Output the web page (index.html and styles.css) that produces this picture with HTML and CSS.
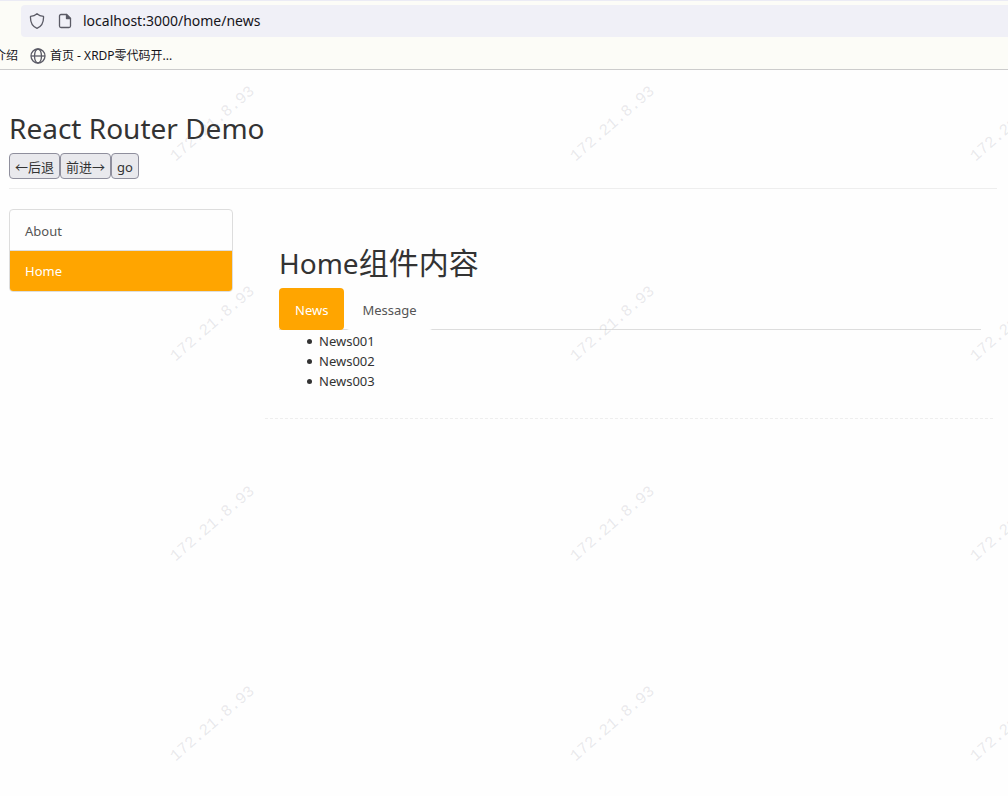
FILE: index.html
```html
<!DOCTYPE html>
<html lang="zh-CN">
<head>
    <meta charset="UTF-8" />
    <title>React Router Demo</title>
    <link rel="stylesheet" href="styles.css">
</head>

<body>
<header class="browser-bar">
    <div class="url-bar">
        <svg class="url-icon" viewBox="0 0 16 16" aria-hidden="true">
            <path d="M8 .8C9.500 2.200 12 3.200 14.500 3.300C14.800 9 12.500 13.500 8 15.300C3.500 13.500 1.200 9 1.500 3.300C4 3.200 6.500 2.200 8 .8Z" />
        </svg>
        <svg class="url-icon" viewBox="0 0 16 16" aria-hidden="true">
            <path d="M9.500 1.500H4A1.500 1.500 0 0 0 2.500 3V13A1.500 1.500 0 0 0 4 14.500H12A1.500 1.500 0 0 0 13.500 13V5.500Z" />
            <path class="fold" d="M9.500 1.500V5.500H13.500Z" />
        </svg>
        <input class="url-input" type="text" value="localhost:3000/home/news" aria-label="URL">
    </div>
    <nav class="bookmarks">
        <a class="bookmark bookmark-cut" href="#">介绍</a>
        <a class="bookmark" href="#">
            <svg class="bookmark-icon" viewBox="0 0 16 16" aria-hidden="true">
                <circle cx="8" cy="8" r="7" />
                <ellipse cx="8" cy="8" rx="3.500" ry="7" />
                <path d="M1 8H15" />
            </svg>
            首页 - XRDP零代码开...
        </a>
    </nav>
</header>

<main class="page">
    <div class="page-header">
        <h2>React Router Demo</h2>
        <div class="nav-buttons">
            <button type="button">←后退</button>
            <button type="button">前进→</button>
            <button type="button">go</button>
        </div>
    </div>

    <div class="row">
        <nav class="list-group">
            <a class="list-group-item" href="#">About</a>
            <a class="list-group-item active" href="#">Home</a>
        </nav>
        <section class="panel">
            <h2>Home<span class="cjk">组件内容</span></h2>
            <ul class="nav-tabs">
                <li><a class="tab active" href="#">News</a></li>
                <li><a class="tab" href="#">Message</a></li>
            </ul>
            <ul class="news-list">
                <li>News001</li>
                <li>News002</li>
                <li>News003</li>
            </ul>
        </section>
    </div>
</main>

<div class="watermark" aria-hidden="true">
    <span>172.21.8.93</span><span>172.21.8.93</span><span>172.21.8.93</span>
    <span>172.21.8.93</span><span>172.21.8.93</span><span>172.21.8.93</span>
    <span>172.21.8.93</span><span>172.21.8.93</span><span>172.21.8.93</span>
    <span>172.21.8.93</span><span>172.21.8.93</span><span>172.21.8.93</span>
</div>
</body>
</html>
```
FILE: styles.css
```css
* {
    box-sizing: border-box;
}

:root {
    --text-color: #333;
    --link-color: #555;
    --border-color: #ddd;
    --active-color: orange;
}

body {
    position: relative;
    margin: 0;
    min-height: 100vh;
    overflow-x: hidden;
    background-color: #fefefe;
    color: var(--text-color);
    font-family: "Noto Sans", "Noto Sans CJK SC", sans-serif;
    font-size: 13px;
    line-height: 20px;
}

a {
    color: var(--link-color);
    text-decoration: none;
}

h2 {
    margin: 0 0 8px;
    font-size: 28px;
    font-weight: 400;
    line-height: 33px;
}

h2 .cjk {
    font-size: 30px;
    line-height: 1;
}

/* Browser toolbar */
.browser-bar {
    height: 70px;
    padding-top: 4px;
    background-color: #fcfcf7;
    border-top: 1px solid #ebebf5;
    border-bottom: 1px solid #ccc;
}

.url-bar {
    display: flex;
    align-items: center;
    gap: 12px;
    height: 32px;
    margin-left: 21px;
    padding-left: 8px;
    background-color: #f0f0f7;
    border-radius: 4px 0 0 4px;
}

.url-icon,
.bookmark-icon {
    width: 16px;
    height: 16px;
    fill: none;
    stroke: #5b5b66;
    stroke-width: 1.3;
    stroke-linejoin: round;
}

.url-icon .fold {
    fill: #5b5b66;
}

.url-input {
    flex: 1;
    margin-left: -2px;
    padding: 0;
    border: none;
    outline: none;
    background: none;
    color: #15141a;
    font: inherit;
    font-size: 14px;
}

.bookmarks {
    display: flex;
    align-items: center;
    gap: 12px;
    padding-top: 9px;
}

.bookmark {
    display: flex;
    align-items: center;
    gap: 4px;
    color: #15141a;
    font-size: 12px;
    white-space: nowrap;
}

.bookmark-cut {
    width: 18px;
    justify-content: flex-end;
    overflow: hidden;
}

/* Page */
.page {
    padding: 42px 11px 0 9px;
}

.page-header {
    margin-bottom: 20px;
    padding-bottom: 9px;
    border-bottom: 1px solid #eee;
}

.nav-buttons {
    display: flex;
}

.nav-buttons button {
    height: 26px;
    padding: 1px 5px 0;
    border: 1px solid #8f8f9d;
    border-radius: 4px;
    background-color: #e9e9ed;
    color: var(--text-color);
    font: inherit;
}

.row {
    display: grid;
    grid-template-columns: 224px 1fr;
    align-items: start;
    gap: 32px;
}

.list-group {
    border: 1px solid var(--border-color);
    border-radius: 4px;
    overflow: hidden;
}

.list-group-item {
    display: block;
    padding: 11px 15px 9px;
}

.list-group-item.active {
    padding: 10px 15px;
    border-top: 1px solid var(--border-color);
    background-color: var(--active-color);
    color: #fff;
}

.panel {
    margin-right: 4px;
    padding: 38px 12px 27px 14px;
    border-bottom: 1px dashed #eee;
}

.nav-tabs {
    display: flex;
    gap: 2px;
    margin: 0;
    padding: 0;
    border-bottom: 1px solid var(--border-color);
    list-style: none;
}

.tab {
    display: block;
    margin-bottom: -1px;
    padding: 12px 16px 10px;
    border-radius: 4px;
    background-color: #fefefe;
}

.tab.active {
    background-color: var(--active-color);
    color: #fff;
}

.news-list {
    margin: 0;
    padding: 1px 0 0 28px;
    list-style: none;
}

.news-list li {
    display: flex;
    align-items: center;
    gap: 7px;
}

.news-list li::before {
    content: "";
    width: 5px;
    height: 5px;
    border-radius: 50%;
    background-color: var(--text-color);
}

/* Watermark laid over the whole page */
.watermark {
    position: absolute;
    inset: 0;
    display: grid;
    grid-template-columns: repeat(3, 400px);
    grid-auto-rows: 200px;
    padding: 24px 0 0 13px;
    overflow: hidden;
    pointer-events: none;
    color: rgba(120, 120, 140, 0.17);
    font-family: "Liberation Mono", monospace;
    font-size: 16px;
}

.watermark span {
    place-self: center;
    transform: rotate(-41deg);
}
```
